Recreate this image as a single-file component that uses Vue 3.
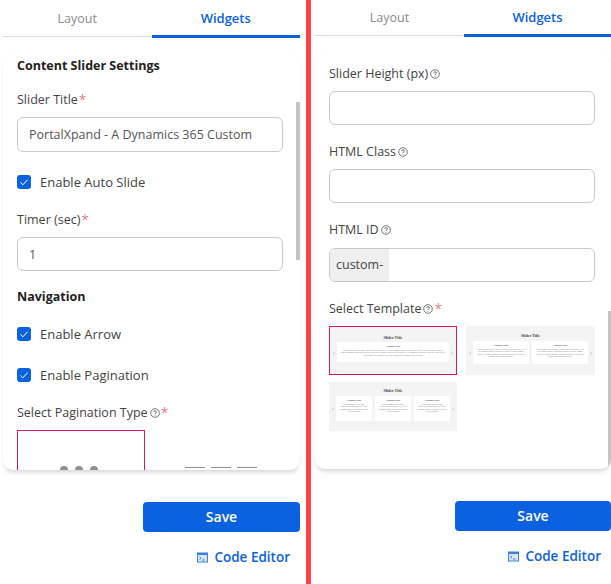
<script setup>
const loremWide = 'Lorem ipsum dolor sit amet, consectetur adipiscing elit, sed do eiusmod tempor incididunt ut labore et dolore magna aliqua. Ut enim ad minim veniam, quis nostrud exercitation ullamco laboris nisi ut aliquip ex ea commodo consequat. Duis aute irure dolor in reprehenderit in voluptate velit esse cillum dolore eu fugiat nulla pariatur.'
const loremTwo = 'Lorem ipsum dolor sit amet, consectetur adipiscing elit, sed do eiusmod tempor incididunt ut labore et dolore magna aliqua. Ut enim ad minim veniam, quis nostrud exercitation ullamco laboris nisi ut aliquip.'
const loremThree = 'Lorem ipsum dolor sit amet, consectetur adipiscing elit, sed do eiusmod tempor incididunt ut labore et dolore magna.'

const templates = [
  { id: 1, selected: true, slides: [{ title: 'Content Title', text: loremWide }] },
  { id: 2, selected: false, slides: [{ title: 'Content Title', text: loremTwo }, { title: 'Content Title', text: loremTwo }] },
  { id: 3, selected: false, slides: [{ title: 'Content Title', text: loremThree }, { title: 'Content Title', text: loremThree }, { title: 'Content Title', text: loremThree }] }
]
</script>

<template>
  <div class="page">
    <!-- first panel -->
    <section class="panel panel-left">
      <div class="tabs">
        <div class="tab">Layout</div>
        <div class="tab active">Widgets</div>
      </div>
      <div class="card">
        <h4 class="heading first">Content Slider Settings</h4>
        <label class="label l-title">Slider Title<span class="req">*</span></label>
        <div class="input input-tall">PortalXpand - A Dynamics 365 Custom</div>
        <div class="check c-auto">
          <svg class="box" viewBox="0 0 14 14"><rect width="14" height="14" rx="3" fill="#0a62e0" /><path d="M3.5 7.4l2.4 2.4 4.7-5.2" fill="none" stroke="#fff" stroke-width="1" /></svg>
          <span>Enable Auto Slide</span>
        </div>
        <label class="label l-timer">Timer (sec)<span class="req">*</span></label>
        <div class="input">1</div>
        <h4 class="heading nav">Navigation</h4>
        <div class="check c-arrow">
          <svg class="box" viewBox="0 0 14 14"><rect width="14" height="14" rx="3" fill="#0a62e0" /><path d="M3.5 7.4l2.4 2.4 4.7-5.2" fill="none" stroke="#fff" stroke-width="1" /></svg>
          <span>Enable Arrow</span>
        </div>
        <div class="check c-page">
          <svg class="box" viewBox="0 0 14 14"><rect width="14" height="14" rx="3" fill="#0a62e0" /><path d="M3.5 7.4l2.4 2.4 4.7-5.2" fill="none" stroke="#fff" stroke-width="1" /></svg>
          <span>Enable Pagination</span>
        </div>
        <label class="label l-type">
          Select Pagination Type
          <svg class="help" viewBox="0 0 10 10"><circle cx="5" cy="5" r="4.3" fill="none" stroke="#555" stroke-width="0.8" /><path d="M3.7 4c0-1.7 2.7-1.7 2.7 0 0 1-1.4 1-1.4 2M5 7v.7" fill="none" stroke="#555" stroke-width="0.8" /></svg>
          <span class="req">*</span>
        </label>
        <div class="types">
          <div class="type type-selected">
            <i class="dot" /><i class="dot" /><i class="dot" />
          </div>
          <div class="type type-lines">
            <i class="dash" /><i class="dash" /><i class="dash" />
          </div>
        </div>
        <div class="scroll scroll-left" />
      </div>
      <div class="actions">
        <button class="save">Save</button>
        <a class="code">
          <svg class="term" viewBox="0 0 11 11"><rect x="0.5" y="1" width="10" height="9" fill="#dbe8fb" stroke="#3b7fe4" /><rect x="0.5" y="1" width="10" height="2" fill="#3b7fe4" /><path d="M2.5 5l1.5 1.2-1.5 1.2M5 8h2.5" fill="none" stroke="#1c5fc4" stroke-width="0.8" /></svg>
          Code Editor
        </a>
      </div>
    </section>

    <div class="divider" />

    <!-- second panel -->
    <section class="panel panel-right">
      <div class="tabs">
        <div class="tab">Layout</div>
        <div class="tab active">Widgets</div>
      </div>
      <div class="card">
        <label class="label l-height">
          Slider Height (px)
          <svg class="help" viewBox="0 0 10 10"><circle cx="5" cy="5" r="4.3" fill="none" stroke="#555" stroke-width="0.8" /><path d="M3.7 4c0-1.7 2.7-1.7 2.7 0 0 1-1.4 1-1.4 2M5 7v.7" fill="none" stroke="#555" stroke-width="0.8" /></svg>
        </label>
        <div class="input" />
        <label class="label l-next">
          HTML Class
          <svg class="help" viewBox="0 0 10 10"><circle cx="5" cy="5" r="4.3" fill="none" stroke="#555" stroke-width="0.8" /><path d="M3.7 4c0-1.7 2.7-1.7 2.7 0 0 1-1.4 1-1.4 2M5 7v.7" fill="none" stroke="#555" stroke-width="0.8" /></svg>
        </label>
        <div class="input" />
        <label class="label l-id">
          HTML ID
          <svg class="help" viewBox="0 0 10 10"><circle cx="5" cy="5" r="4.3" fill="none" stroke="#555" stroke-width="0.8" /><path d="M3.7 4c0-1.7 2.7-1.7 2.7 0 0 1-1.4 1-1.4 2M5 7v.7" fill="none" stroke="#555" stroke-width="0.8" /></svg>
        </label>
        <div class="input input-addon"><span class="addon">custom-</span></div>
        <label class="label l-template">
          Select Template
          <svg class="help" viewBox="0 0 10 10"><circle cx="5" cy="5" r="4.3" fill="none" stroke="#555" stroke-width="0.8" /><path d="M3.7 4c0-1.7 2.7-1.7 2.7 0 0 1-1.4 1-1.4 2M5 7v.7" fill="none" stroke="#555" stroke-width="0.8" /></svg>
          <span class="req">*</span>
        </label>
        <div class="thumbs">
          <div
            v-for="t in templates"
            :key="t.id"
            class="thumb"
            :class="[`thumb-${t.slides.length}`, { selected: t.selected }]"
          >
            <div class="thumb-title">Slider Title</div>
            <div class="thumb-row">
              <span class="arrow">‹</span>
              <div class="thumb-slides">
                <div v-for="(s, i) in t.slides" :key="i" class="slide">
                  <div class="slide-title">{{ s.title }}</div>
                  <div class="slide-text">{{ s.text }}</div>
                </div>
              </div>
              <span class="arrow">›</span>
            </div>
          </div>
        </div>
        <div class="scroll scroll-right" />
      </div>
      <div class="actions">
        <button class="save">Save</button>
        <a class="code">
          <svg class="term" viewBox="0 0 11 11"><rect x="0.5" y="1" width="10" height="9" fill="#dbe8fb" stroke="#3b7fe4" /><rect x="0.5" y="1" width="10" height="2" fill="#3b7fe4" /><path d="M2.5 5l1.5 1.2-1.5 1.2M5 8h2.5" fill="none" stroke="#1c5fc4" stroke-width="0.8" /></svg>
          Code Editor
        </a>
      </div>
    </section>
  </div>
</template>

<style>
html, body {
  margin: 0;
  background: #fff;
  overflow: hidden;
}
</style>

<style scoped>
.page {
  display: flex;
  width: 611px;
  height: 584px;
  overflow: hidden;
  font-family: "Open Sans", "Noto Sans", sans-serif;
  color: #333;
  background: #fff;
}

.panel {
  flex: none;
  box-sizing: border-box;
}

.panel-left {
  width: 306px;
  padding: 1px 6px 0 3px;
}

.panel-right {
  width: 300px;
  padding-left: 4px;
}

.divider {
  flex: none;
  width: 5px;
  background: #fb4444;
}

.tabs {
  display: flex;
  align-items: flex-start;
  height: 37px;
}

.tab {
  flex: 1;
  box-sizing: border-box;
  height: 36px;
  padding-top: 7px;
  border-bottom: 1px solid #ddd;
  text-align: center;
  font-size: 12.5px;
  line-height: 22px;
  color: #8a8a8a;
}

.tab.active {
  height: 37px;
  padding-top: 6px;
  color: #0a62e0;
  font-size: 13px;
  font-weight: 600;
  border-bottom: 3px solid #0a62e0;
}

.panel-right .tab.active {
  flex: 0 0 147px;
}

.card {
  position: relative;
  box-sizing: border-box;
  height: 416px;
  margin-top: 16px;
  padding: 0 14px;
  overflow: hidden;
  border-radius: 10px;
  background: #fff;
  box-shadow: 0 4px 5px -2px rgba(0, 0, 0, 0.18), 0 0 3px rgba(0, 0, 0, 0.02);
}

.actions {
  display: flex;
  flex-direction: column;
  align-items: flex-end;
  padding-top: 32px;
}

.save {
  width: 157px;
  height: 30px;
  padding: 0 0 2px;
  border: 0;
  border-radius: 4px;
  background: #0a62e0;
  color: #fff;
  font-family: inherit;
  font-size: 14px;
  font-weight: 600;
}

.panel-right .save {
  width: 156px;
}

.code {
  display: flex;
  align-items: center;
  gap: 6px;
  margin-top: 15px;
  padding-right: 10px;
  color: #0a62e0;
  font-size: 13.5px;
  font-weight: 600;
  line-height: 20px;
}

.term {
  width: 11px;
  height: 11px;
}

.heading {
  margin: 0 0 -2px;
  color: #222;
  font-size: 12.5px;
  font-weight: 700;
  line-height: 22px;
}

.heading.first {
  padding-top: 1px;
}

.heading.nav {
  margin-top: 15px;
}

.label {
  display: flex;
  align-items: center;
  padding-top: 1px;
  color: #444;
  font-size: 12.5px;
  line-height: 20px;
}

.l-title { margin-top: 14px; margin-bottom: 7px; }
.l-timer { margin-top: 17px; margin-bottom: 7px; }
.l-type { margin-top: 17px; margin-bottom: 7px; }
.l-height { margin-top: 10px; margin-bottom: 7px; }
.l-next { margin-top: 16px; margin-bottom: 7px; }
.l-id { margin-top: 16px; margin-bottom: 8px; }
.l-template { margin-top: 16px; margin-bottom: 7px; }

.req {
  margin-left: 1px;
  color: #ee3b5b;
  font-size: 14px;
  font-weight: 300;
}

.help {
  width: 10px;
  height: 10px;
  margin-left: 2px;
}

.input {
  box-sizing: border-box;
  width: 266px;
  height: 34px;
  padding: 0 11px;
  overflow: hidden;
  border: 1px solid #c9c9c9;
  border-radius: 6px;
  color: #555;
  font-size: 12.5px;
  line-height: 33px;
  white-space: nowrap;
}

.input-tall {
  height: 35px;
  line-height: 34px;
}

.input-addon {
  padding: 0;
}

.addon {
  display: block;
  box-sizing: border-box;
  width: 59px;
  height: 32px;
  padding-left: 6px;
  line-height: 31px;
  background: #efefef;
  color: #444;
}

.check {
  display: flex;
  align-items: center;
  gap: 9px;
  font-size: 13px;
  line-height: 20px;
  color: #444;
}

.c-auto { margin-top: 20px; }
.c-arrow { margin-top: 18px; }
.c-page { margin-top: 21px; }

.box {
  width: 14px;
  height: 14px;
}

.types {
  display: flex;
}

.type {
  box-sizing: border-box;
  flex: none;
  display: flex;
  align-items: flex-end;
  justify-content: center;
  width: 128px;
  height: 50px;
}

.type-selected {
  gap: 7px;
  padding: 0 4px 5px 0;
  border: 1px solid #d6145f;
}

.type-lines {
  width: 151px;
  gap: 6px;
  padding-bottom: 12px;
}

.dot {
  width: 8px;
  height: 8px;
  border-radius: 50%;
  background: #8f8f8f;
}

.dash {
  width: 20px;
  height: 1px;
  background: #8f8f8f;
}

.thumbs {
  display: grid;
  grid-template-columns: 128px 129px;
  column-gap: 9px;
  row-gap: 7px;
}

.thumb {
  box-sizing: border-box;
  height: 49px;
  background: #f4f4f4;
}

.thumb-1 {
  padding-top: 8px;
  border: 1px solid #d6145f;
}

.thumb-2 {
  padding-top: 7px;
}

.thumb-3 {
  padding-top: 6px;
}

.thumb-title {
  font-family: "Liberation Serif", serif;
  font-size: 4px;
  font-weight: 700;
  line-height: 6px;
  text-align: center;
  color: #444;
}

.thumb-row {
  display: flex;
  align-items: center;
  gap: 1px;
  padding: 0 2px;
  margin-top: 2px;
}

.thumb-1 .thumb-row {
  margin-top: 1px;
}

.arrow {
  flex: none;
  width: 4px;
  color: #aaa;
  font-size: 7px;
  line-height: 7px;
  text-align: center;
}

.thumb-slides {
  flex: 1;
  display: flex;
  gap: 3px;
  min-width: 0;
}

.slide {
  flex: 1;
  min-width: 0;
  box-sizing: border-box;
  padding: 2px 3px 0;
  overflow: hidden;
  background: #fff;
}

.thumb-1 .slide { height: 20px; }
.thumb-2 .slide { height: 23px; }
.thumb-3 .slide { height: 25px; }

.slide-title {
  font-family: "Liberation Serif", serif;
  font-size: 2.5px;
  font-weight: 700;
  line-height: 5px;
  text-align: center;
  color: #555;
}

.slide-text {
  font-family: "Liberation Serif", serif;
  font-size: 2px;
  line-height: 2.4px;
  text-align: center;
  color: #777;
}

.scroll {
  position: absolute;
  right: 0;
  width: 4px;
  background: #c4c4c4;
}

.scroll-left {
  top: 48px;
  height: 158px;
}

.scroll-right {
  top: 258px;
  bottom: 0;
  width: 3px;
}
</style>
